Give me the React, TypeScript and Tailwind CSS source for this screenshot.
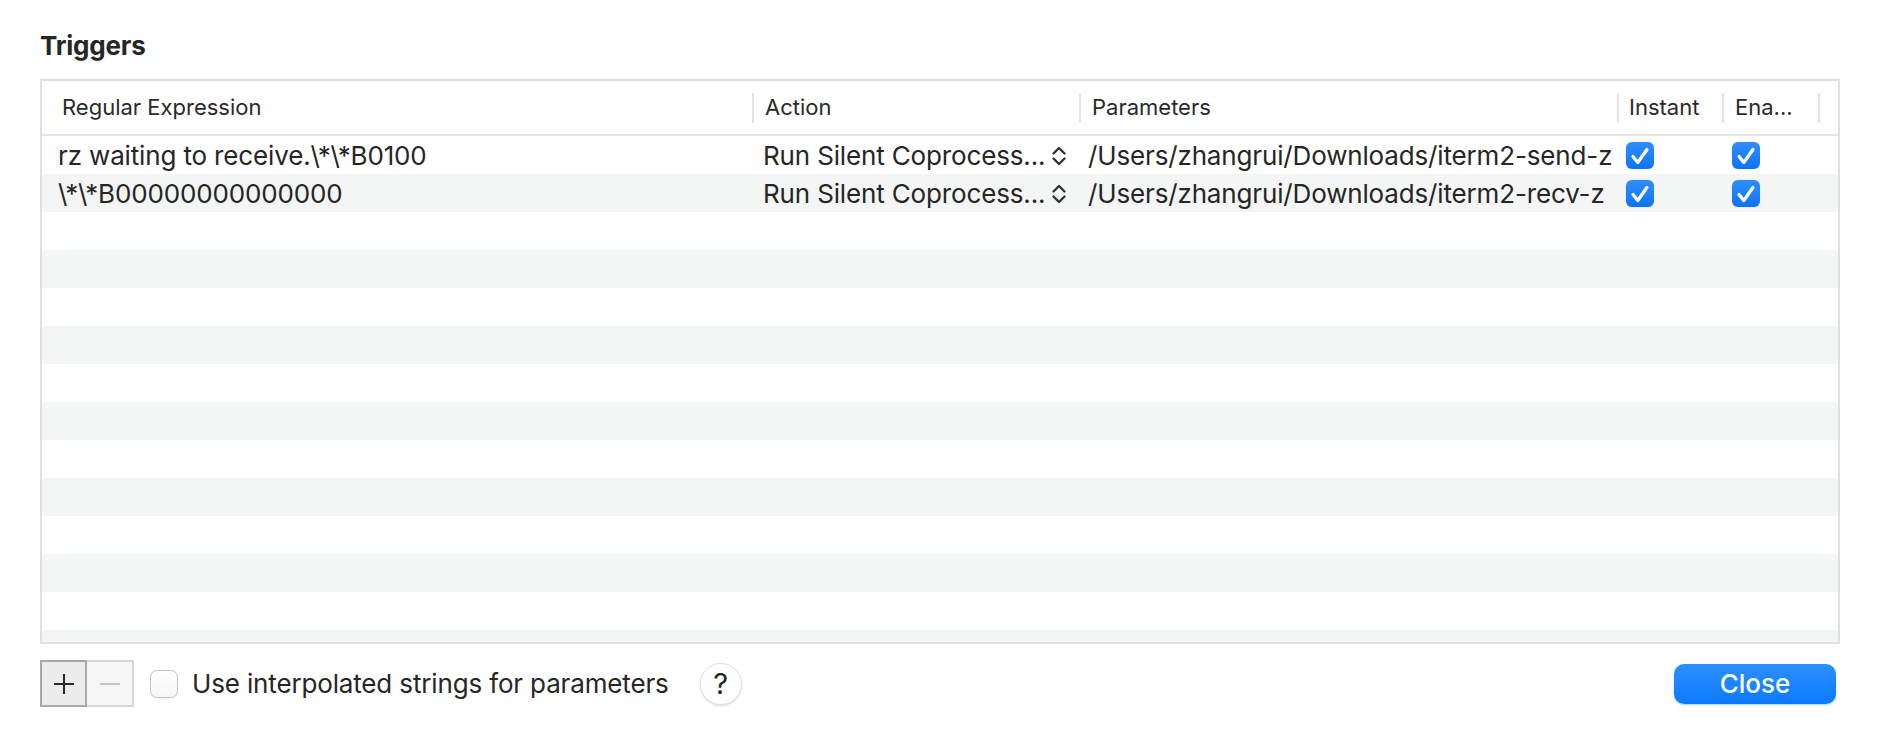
import React from 'react';

type Trigger = {
  regex: string;
  action: string;
  params: string;
  instant: boolean;
  enabled: boolean;
};

const triggers: Trigger[] = [
  {
    regex: 'rz waiting to receive.\\*\\*B0100',
    action: 'Run Silent Coprocess...',
    params: '/Users/zhangrui/Downloads/iterm2-send-z',
    instant: true,
    enabled: true,
  },
  {
    regex: '\\*\\*B00000000000000',
    action: 'Run Silent Coprocess...',
    params: '/Users/zhangrui/Downloads/iterm2-recv-z',
    instant: true,
    enabled: true,
  },
];

const EMPTY_ROWS = 12;

const cols = 'grid grid-cols-[712px_327px_538px_105px_96px_1fr]';

const HeaderCell: React.FC<{ label: string; pad: string; sep?: boolean }> = ({ label, pad, sep = true }) => (
  <div className={`flex items-center h-full ${pad}`}>
    <span className="flex-1 truncate">{label}</span>
    {sep && <div className="w-[2px] h-[30px] bg-[#e4e4e4]" />}
  </div>
);

const Check: React.FC = () => (
  <div className="w-[28px] h-[27px] rounded-[6px] bg-gradient-to-b from-[#2f8efc] to-[#0a74f5] flex items-center justify-center shadow-[0_0_1px_rgba(0,0,0,0.3)]">
    <svg width="24" height="24" viewBox="0 0 24 24" fill="none">
      <path d="M5 12.5 L9.8 18.5 L19 5.5" stroke="white" strokeWidth="3.2" strokeLinecap="round" strokeLinejoin="round" />
    </svg>
  </div>
);

const Chevrons: React.FC = () => (
  <svg width="16" height="22" viewBox="0 0 16 22" fill="none">
    <path d="M2.5 8.5 L8 3 L13.5 8.5" stroke="#333" strokeWidth="2.4" strokeLinecap="round" strokeLinejoin="round" />
    <path d="M2.5 13.5 L8 19 L13.5 13.5" stroke="#333" strokeWidth="2.4" strokeLinecap="round" strokeLinejoin="round" />
  </svg>
);

export default function App() {
  return (
    <div className="w-[1880px] h-[748px] bg-white text-[#262626] font-['Inter','Liberation_Sans',sans-serif] px-[40px] pt-[30px]">
      <h2 className="text-[26px] leading-[32px] font-bold tracking-[-0.2px]">Triggers</h2>

      {/* table */}
      <div className="mt-[17px] w-[1800px] h-[565px] border-2 border-[#e0e0e0] overflow-hidden">
        <div className={`${cols} h-[55px] border-b-2 border-[#e6e6e6] text-[22px] text-[#2a2a2a]`}>
          <HeaderCell label="Regular Expression" pad="pl-[20px]" />
          <HeaderCell label="Action" pad="pl-[11px]" />
          <HeaderCell label="Parameters" pad="pl-[11px]" />
          <HeaderCell label="Instant" pad="pl-[10px]" />
          <HeaderCell label="Ena..." pad="pl-[11px]" />
          <div />
        </div>

        {triggers.map((t, i) => (
          <div key={i} className={`${cols} h-[38px] items-center text-[26px] tracking-[-0.15px] ${i % 2 === 1 ? 'bg-[#f4f5f5]' : 'bg-white'}`}>
            <div className="pl-[16px] truncate">{t.regex}</div>
            <div className="pl-[9px] pr-[14px] flex items-center">
              <span className="flex-1 truncate">{t.action}</span>
              <Chevrons />
            </div>
            <div className="pl-[7px] truncate">{t.params}</div>
            <div className="pl-[7px]">{t.instant && <Check />}</div>
            <div className="pl-[8px]">{t.enabled && <Check />}</div>
            <div />
          </div>
        ))}

        {Array.from({ length: EMPTY_ROWS }).map((_, i) => (
          <div key={`e${i}`} className={`h-[38px] ${(i + triggers.length) % 2 === 1 ? 'bg-[#f4f5f5]' : 'bg-white'}`} />
        ))}
      </div>

      {/* footer */}
      <div className="mt-[16px] flex items-center">
        <div className="flex">
          <button className="w-[47px] h-[47px] bg-[#ececec] border-2 border-[#a9a9a9] flex items-center justify-center">
            <svg width="24" height="24" viewBox="0 0 24 24">
              <path d="M12 2 V22 M2 12 H22" stroke="#2b2b2b" strokeWidth="2" />
            </svg>
          </button>
          <button className="w-[47px] h-[47px] bg-[#f6f6f6] border-2 border-l-0 border-[#d6d6d6] flex items-center justify-center">
            <svg width="24" height="24" viewBox="0 0 24 24">
              <path d="M2 12 H22" stroke="#c4c4c4" strokeWidth="2" />
            </svg>
          </button>
        </div>

        <div className="ml-[16px] w-[28px] h-[28px] rounded-[7px] border border-[#c4c4c4] bg-gradient-to-b from-white to-[#f7f7f7] shadow-[0_1px_1px_rgba(0,0,0,0.05)]" />
        <span className="ml-[14px] text-[26px] leading-[32px] tracking-[-0.15px]">Use interpolated strings for parameters</span>

        <button className="ml-[31px] w-[42px] h-[42px] rounded-full bg-white border border-[#e2e2e2] shadow-[0_1px_2px_rgba(0,0,0,0.15)] flex items-center justify-center text-[29px] leading-none font-normal text-[#262626]">
          ?
        </button>

        <button className="ml-auto mr-[4px] w-[162px] h-[40px] rounded-[10px] bg-gradient-to-b from-[#2b90fd] to-[#0a79ff] text-white text-[26px] leading-[32px] font-medium shadow-[0_1px_2px_rgba(0,122,255,0.35)]">
          Close
        </button>
      </div>
    </div>
  );
}
